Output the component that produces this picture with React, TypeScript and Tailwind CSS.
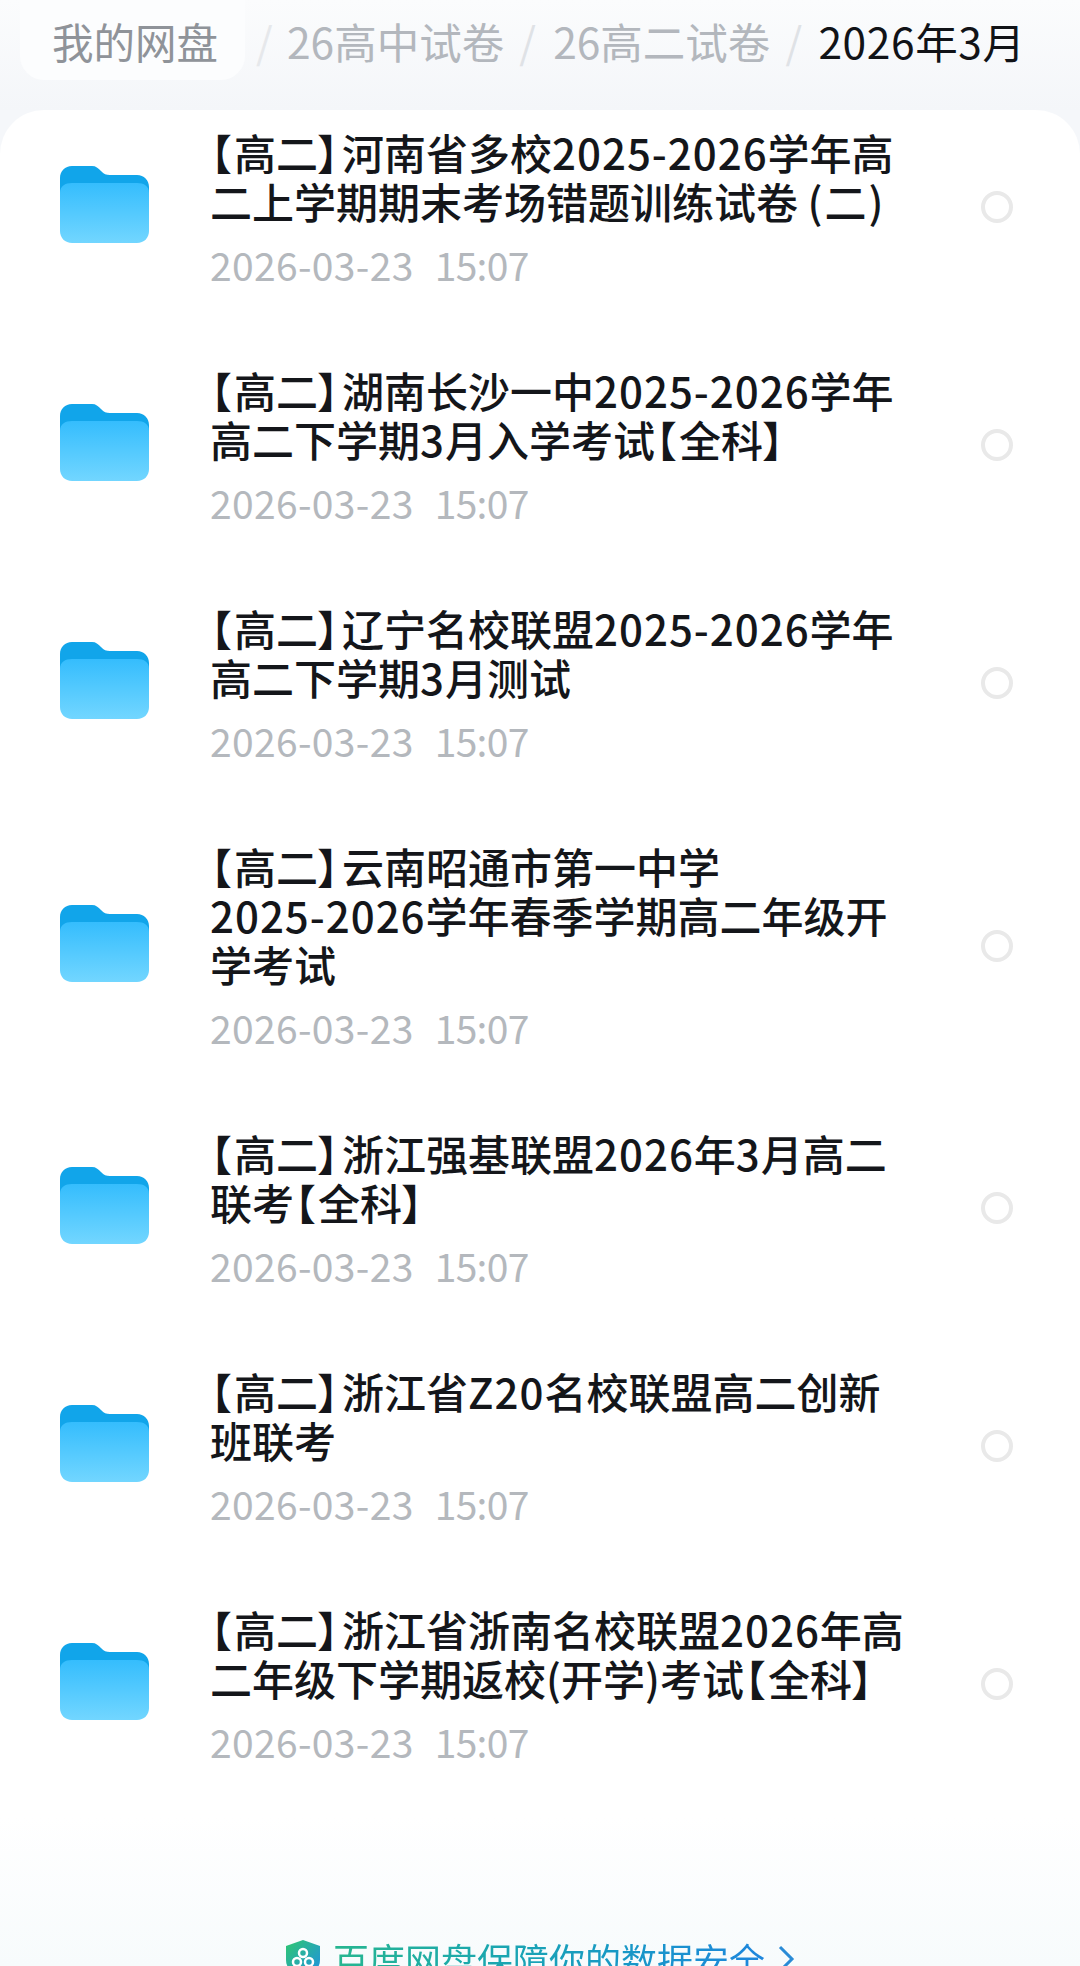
const rows: string[][] = [
  ['【高二】河南省多校2025-2026学年高', '二上学期期末考场错题训练试卷 (二)'],
  ['【高二】湖南长沙一中2025-2026学年', '高二下学期3月入学考试【全科】'],
  ['【高二】辽宁名校联盟2025-2026学年', '高二下学期3月测试'],
  ['【高二】云南昭通市第一中学', '2025-2026学年春季学期高二年级开', '学考试'],
  ['【高二】浙江强基联盟2026年3月高二', '联考【全科】'],
  ['【高二】浙江省Z20名校联盟高二创新', '班联考'],
  ['【高二】浙江省浙南名校联盟2026年高', '二年级下学期返校(开学)考试【全科】'],
];

const FolderIcon = () => (
  <svg width="89" height="77" viewBox="0 0 89 77" className="shrink-0 mb-[5px]">
    <defs>
      <linearGradient id="folderFront" x1="0" y1="0" x2="0" y2="1">
        <stop offset="0" stopColor="#35bdfd" />
        <stop offset="1" stopColor="#72d6ff" />
      </linearGradient>
    </defs>
    <path
      d="M0 12C0 5 5 0 12 0H32C36 0 38 2 41 5C44 8 46 9 50 9H77C84 9 89 14 89 21V40H0Z"
      fill="#11a5ea"
    />
    <path
      d="M0 27C0 20 5 17 12 17H77C84 17 89 20 89 27V65C89 72 84 77 77 77H12C5 77 0 72 0 65Z"
      fill="url(#folderFront)"
    />
  </svg>
);

const ShieldIcon = () => (
  <svg width="34" height="38" viewBox="0 0 34 38" className="shrink-0">
    <defs>
      <linearGradient id="shieldFill" x1="0" y1="0" x2="1" y2="1">
        <stop offset="0" stopColor="#2fc76f" />
        <stop offset="1" stopColor="#1f8fe8" />
      </linearGradient>
    </defs>
    <path d="M17 0L34 6V20C34 29 26 35 17 38C8 35 0 29 0 20V6Z" fill="url(#shieldFill)" />
    <circle cx="17" cy="13" r="4" fill="none" stroke="#fff" strokeWidth="2.5" />
    <circle cx="11" cy="22" r="4" fill="none" stroke="#fff" strokeWidth="2.5" />
    <circle cx="23" cy="22" r="4" fill="none" stroke="#fff" strokeWidth="2.5" />
  </svg>
);

// latin runs and the brackets sit a little wider in the screenshot than in Noto
const TitleLine = ({ text }: { text: string }) => (
  <div className="whitespace-nowrap">
    {text.split(/([0-9A-Za-z-]+|【|】|\(二\))/).map((part, i) => {
      if (part === '【' || part === '】') {
        return (
          <span key={i} className="mr-[3px]">
            {part}
          </span>
        );
      }
      if (part === '(二)') {
        return (
          <span key={i} className="tracking-[2px]">
            {part}
          </span>
        );
      }
      if (/^[0-9A-Za-z-]+$/.test(part)) {
        return (
          <span key={i} className="tracking-[1px]">
            {part}
          </span>
        );
      }
      return part;
    })}
  </div>
);

const FileRow = ({ lines }: { lines: string[] }) => (
  <div className="flex items-center pl-[60px] pr-[67px]">
    <FolderIcon />
    <div className="ml-[61px] flex-1">
      <div className="text-[42px] leading-[49px] font-medium text-[#14161a] [font-feature-settings:'palt']">
        {lines.map((line) => (
          <TitleLine key={line} text={line} />
        ))}
      </div>
      <div className="mt-[16px] flex text-[39px] leading-[46px] text-[#b4b8bd] whitespace-nowrap">
        <span className="tracking-[0.35px]">2026-03-23</span>
        <span className="ml-[21px] tracking-[-0.7px]">15:07</span>
      </div>
    </div>
    <div className="w-[32px] h-[32px] rounded-full border-[4px] border-[#e9e9e9] shrink-0" />
  </div>
);

export default function App() {
  return (
    <div className="w-[1080px] h-[1966px] overflow-hidden bg-[#f5f7fa] font-['Noto_Sans_CJK_SC','Noto_Sans',sans-serif]">
      <div className="h-[110px] flex items-start text-[42.5px] leading-[82px] whitespace-nowrap bg-gradient-to-b from-[#fbfcfd] to-[#f4f6f9]">
        <div className="ml-[20px] w-[225px] h-[80px] pl-[32px] rounded-b-[24px] bg-[#fcfdfe] text-[41.5px] text-[#8f9399]">我的网盘</div>
        <span className="ml-[11px] w-[31px] text-[#e6e8eb]">/</span>
        <span className="text-[#b3b7bd]">26高中试卷</span>
        <span className="ml-[15px] w-[34px] text-[#dfe2e6]">/</span>
        <span className="text-[#b3b7bd]">26高二试卷</span>
        <span className="ml-[15px] w-[33px] text-[#dfe2e6]">/</span>
        <span className="tracking-[0.6px] text-[#111317]">2026年3月</span>
      </div>
      <div className="rounded-t-[44px] pt-[17px] bg-gradient-to-b from-white from-[92%] to-[#f7fbfc] h-[1856px]">
        <div className="flex flex-col gap-[78px]">
          {rows.map((lines) => (
            <FileRow key={lines[0]} lines={lines} />
          ))}
        </div>
        <div className="mt-[171px] flex items-center pl-[286px] text-[36px] leading-[48px]">
          <ShieldIcon />
          <span className="ml-[13px] bg-gradient-to-r from-[#27b68f] to-[#1f86dd] bg-clip-text text-transparent">
            百度网盘保障你的数据安全
          </span>
          <svg width="18" height="30" viewBox="0 0 18 30" className="ml-[12px]">
            <path d="M3 3L15 15L3 27" fill="none" stroke="#2a8bd6" strokeWidth="3" />
          </svg>
        </div>
      </div>
    </div>
  );
}
